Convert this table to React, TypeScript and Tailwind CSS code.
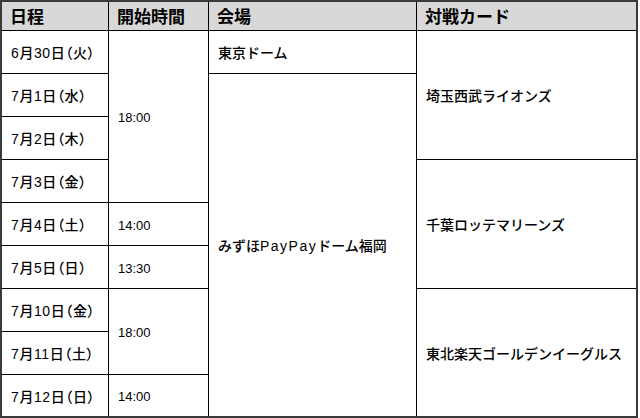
import React from "react";

const font = { fontFamily: '"Liberation Sans", "Noto Sans CJK JP", sans-serif' };

export default function App() {
  const dates = [
    "6月30日（火）",
    "7月1日（水）",
    "7月2日（木）",
    "7月3日（金）",
    "7月4日（土）",
    "7月5日（日）",
    "7月10日（金）",
    "7月11日（土）",
    "7月12日（日）",
  ];
  const rowStarts = [
    "row-start-2",
    "row-start-3",
    "row-start-4",
    "row-start-5",
    "row-start-6",
    "row-start-7",
    "row-start-8",
    "row-start-9",
    "row-start-10",
  ];
  const cell = "bg-white flex items-center pl-[9px] pt-[3px] text-[14px] font-medium text-black";
  const time = "bg-white flex items-center pl-[9px] pt-[3px] text-[13px] text-black";
  const head = "bg-[#d8d8d8] flex items-center pl-[8px] pt-[3px] text-[17px] font-bold text-black row-start-1";
  return (
    <div className="w-[640px] h-[418px] bg-white" style={font}>
      <div className="grid w-[638px] border-2 border-[#3a3a3a] bg-black gap-px grid-cols-[106px_99px_207px_219px] grid-rows-[28px_repeat(8,42px)_41px]">
        <div className={`${head} col-start-1`}>日程</div>
        <div className={`${head} col-start-2`}>開始時間</div>
        <div className={`${head} col-start-3`}>会場</div>
        <div className={`${head} col-start-4`}>対戦カード</div>

        {dates.map((d, i) => (
          <div
            key={d}
            className={`${cell} col-start-1 ${rowStarts[i]} tracking-[0.6px] [font-feature-settings:'palt']`}
          >
            {d}
          </div>
        ))}

        <div className={`${time} col-start-2 row-start-2 row-span-4`}>18:00</div>
        <div className={`${time} col-start-2 row-start-6`}>14:00</div>
        <div className={`${time} col-start-2 row-start-7`}>13:30</div>
        <div className={`${time} col-start-2 row-start-8 row-span-2`}>18:00</div>
        <div className={`${time} col-start-2 row-start-10`}>14:00</div>

        <div className={`${cell} col-start-3 row-start-2`}>東京ドーム</div>
        <div className={`${cell} col-start-3 row-start-3 row-span-8`}>
          みずほ<span className="tracking-[1.5px]">PayPay</span>ドーム福岡
        </div>

        <div className={`${cell} col-start-4 row-start-2 row-span-3`}>埼玉西武ライオンズ</div>
        <div className={`${cell} col-start-4 row-start-5 row-span-3`}>千葉ロッテマリーンズ</div>
        <div className={`${cell} col-start-4 row-start-8 row-span-3`}>東北楽天ゴールデンイーグルス</div>
      </div>
    </div>
  );
}
